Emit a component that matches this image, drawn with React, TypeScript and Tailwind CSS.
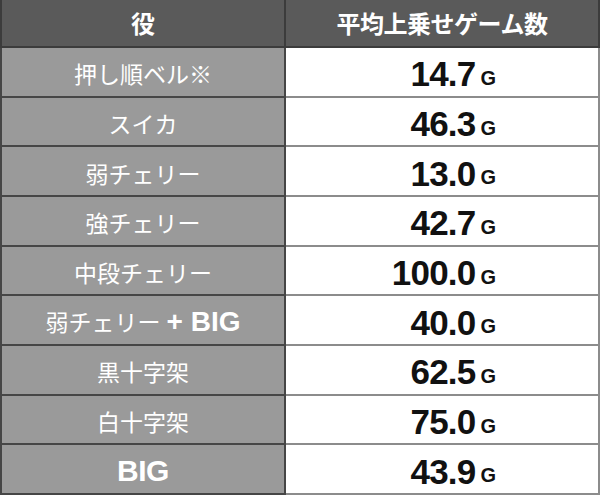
const rows = [
  { name: '押し順ベル※', value: '14.7' },
  { name: 'スイカ', value: '46.3' },
  { name: '弱チェリー', value: '13.0' },
  { name: '強チェリー', value: '42.7' },
  { name: '中段チェリー', value: '100.0' },
  { name: '弱チェリー + BIG', value: '40.0' },
  { name: '黒十字架', value: '62.5' },
  { name: '白十字架', value: '75.0' },
  { name: 'BIG', value: '43.9' },
]

const jp = "font-['Noto_Sans_CJK_JP',sans-serif]"

const Label = ({ name }: { name: string }) => {
  if (name === 'BIG') {
    return <span className="font-['Liberation_Sans',sans-serif] text-[30px] font-bold tracking-[-0.5px]">BIG</span>
  }
  if (name.endsWith('+ BIG')) {
    return (
      <span>
        弱チェリー
        <span className="ml-[6px] font-['Liberation_Sans',sans-serif] text-[28px] font-bold">+ BIG</span>
      </span>
    )
  }
  return <span>{name}</span>
}

export default function App() {
  return (
    <div className={`flex h-[495px] w-[600px] flex-col bg-white ${jp}`}>
      <div className="grid h-[48px] shrink-0 grid-cols-[286px_1fr] bg-[#5a5a5a] text-white">
        <div className="flex items-center justify-center border-b-2 border-l-2 border-r-2 border-[#3c3c3c] text-[24px] font-bold">
          役
        </div>
        <div className="flex items-center justify-center border-b-2 border-r-2 border-[#3c3c3c] text-[24px] font-bold tracking-[-0.5px]">
          平均上乗せゲーム数
        </div>
      </div>
      {rows.map((row) => (
        <div key={row.name} className="grid flex-1 grid-cols-[286px_1fr]">
          <div className="flex items-center justify-center border-b-2 border-l-2 border-r-2 border-[#464646] bg-[#9a9a9a] pt-1 text-[23px] leading-none text-white">
            <Label name={row.name} />
          </div>
          <div className="flex items-center justify-end border-b-2 border-r-2 border-[#8c8c8c] pr-[102px] pt-1 font-['Liberation_Sans',sans-serif] font-bold leading-none text-[#111]">
            <span className="text-[35px] tracking-[-0.8px]">{row.value}</span>
            <span className="ml-[5px] mt-[8px] text-[20px]">G</span>
          </div>
        </div>
      ))}
    </div>
  )
}
